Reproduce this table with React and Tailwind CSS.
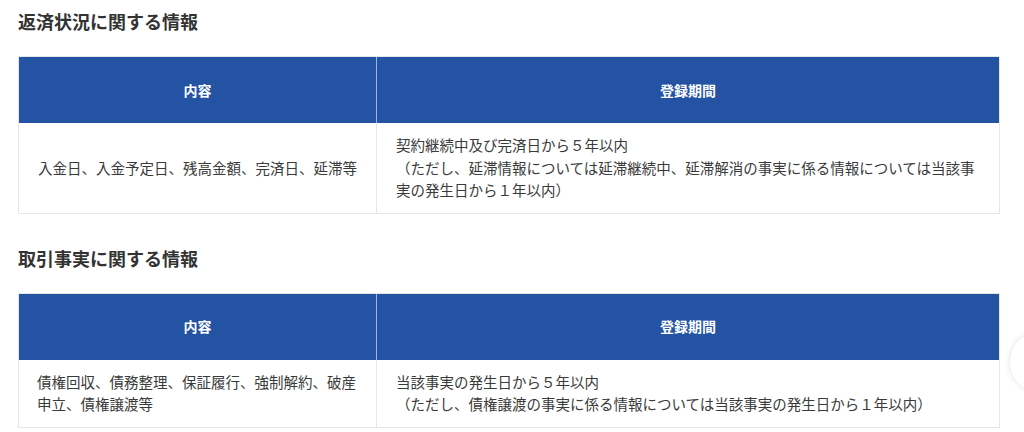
import React from 'react';

const sections = [
  {
    title: '返済状況に関する情報',
    content: '入金日、入金予定日、残高金額、完済日、延滞等',
    contentAlign: 'text-center',
    period: [
      '契約継続中及び完済日から５年以内',
      '（ただし、延滞情報については延滞継続中、延滞解消の事実に係る情報については当該事実の発生日から１年以内）',
    ],
  },
  {
    title: '取引事実に関する情報',
    content: '債権回収、債務整理、保証履行、強制解約、破産申立、債権譲渡等',
    contentAlign: 'text-left',
    period: [
      '当該事実の発生日から５年以内',
      '（ただし、債権譲渡の事実に係る情報については当該事実の発生日から１年以内）',
    ],
  },
];

function InfoTable({ section }) {
  return (
    <div className="w-[982px] grid grid-cols-[358px_1fr] border border-[#e6e6e6]">
      <div className="h-[66px] flex items-center justify-center bg-[#2353a2] text-white text-[14px] font-bold border-r border-[#9fb4da]">
        内容
      </div>
      <div className="h-[66px] flex items-center justify-center bg-[#2353a2] text-white text-[14px] font-bold">
        登録期間
      </div>
      <div className={`flex items-center border-r border-[#e6e6e6] px-[18px] py-[11px] text-[14.5px] leading-[22.5px] text-[#3a3a3a] ${section.contentAlign}`}>
        <p className="w-full">{section.content}</p>
      </div>
      <div className="pl-[19px] pr-[15px] py-[11px] text-[14.5px] leading-[22.5px] text-[#3a3a3a]">
        {section.period.map((line, i) => (
          <p key={i}>{line}</p>
        ))}
      </div>
    </div>
  );
}

export default function App() {
  return (
    <div
      className="relative w-[1024px] h-[432px] overflow-hidden bg-white px-[18px] pt-[8px]"
      style={{ fontFamily: '"Noto Sans CJK JP", "Noto Sans", sans-serif' }}
    >
      {sections.map((section, i) => (
        <section key={section.title} className={i > 0 ? 'mt-[31px]' : ''}>
          <h2 className="h-[27px] leading-[27px] text-[18px] font-bold text-[#333333] mb-[21px]">
            {section.title}
          </h2>
          <InfoTable section={section} />
        </section>
      ))}
      <div className="absolute left-[1010px] top-[332px] w-[60px] h-[60px] rounded-full bg-white shadow-[0_0_6px_rgba(0,0,0,0.12)]" />
    </div>
  );
}
